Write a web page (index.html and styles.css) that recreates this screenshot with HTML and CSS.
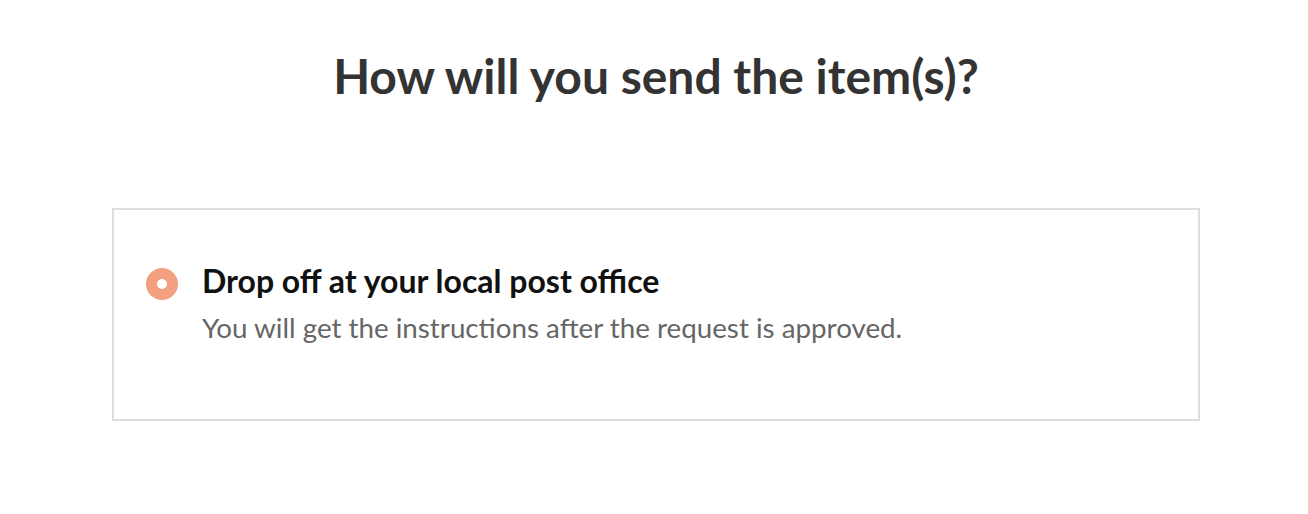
FILE: index.html
```html
<!DOCTYPE html>
<html>
<head>
<meta charset="utf-8">
<link rel="stylesheet" href="styles.css">
</head>
<body>
<main class="page">
  <h1 class="heading">How will you send the item(s)?</h1>
  <div class="option">
    <span class="radio"><span class="radio-dot"></span></span>
    <div class="option-text">
      <div class="option-title">Drop off at your local post office</div>
      <div class="option-desc">You will get the instructions after the request is approved.</div>
    </div>
  </div>
</main>
</body>
</html>
```
FILE: styles.css
```css
html, body {
  margin: 0;
  padding: 0;
  background: #fff;
}
body {
  font-family: Lato, "Open Sans", sans-serif;
}
.page {
  padding: 0 108px 0 112px;
}
.heading {
  margin: 0;
  padding-top: 46px;
  font-size: 48px;
  line-height: 60px;
  font-weight: 700;
  color: #333333;
  text-align: center;
}
.option {
  margin-top: 102px;
  height: 213px;
  border: 2px solid #dddddd;
  display: flex;
  align-items: flex-start;
  padding: 51px 32px 0 32px;
  box-sizing: border-box;
}
.radio {
  flex: none;
  width: 32px;
  height: 32px;
  border-radius: 50%;
  background: #f2a07f;
  display: flex;
  align-items: center;
  justify-content: center;
  margin-top: 7px;
}
.radio-dot {
  width: 10px;
  height: 10px;
  border-radius: 50%;
  background: #fff;
}
.option-text {
  margin-left: 24px;
}
.option-title {
  font-size: 32px;
  line-height: 40px;
  font-weight: 700;
  color: #111;
}
.option-desc {
  margin-top: 9px;
  font-size: 27.75px;
  line-height: 36px;
  color: #666;
}
```
